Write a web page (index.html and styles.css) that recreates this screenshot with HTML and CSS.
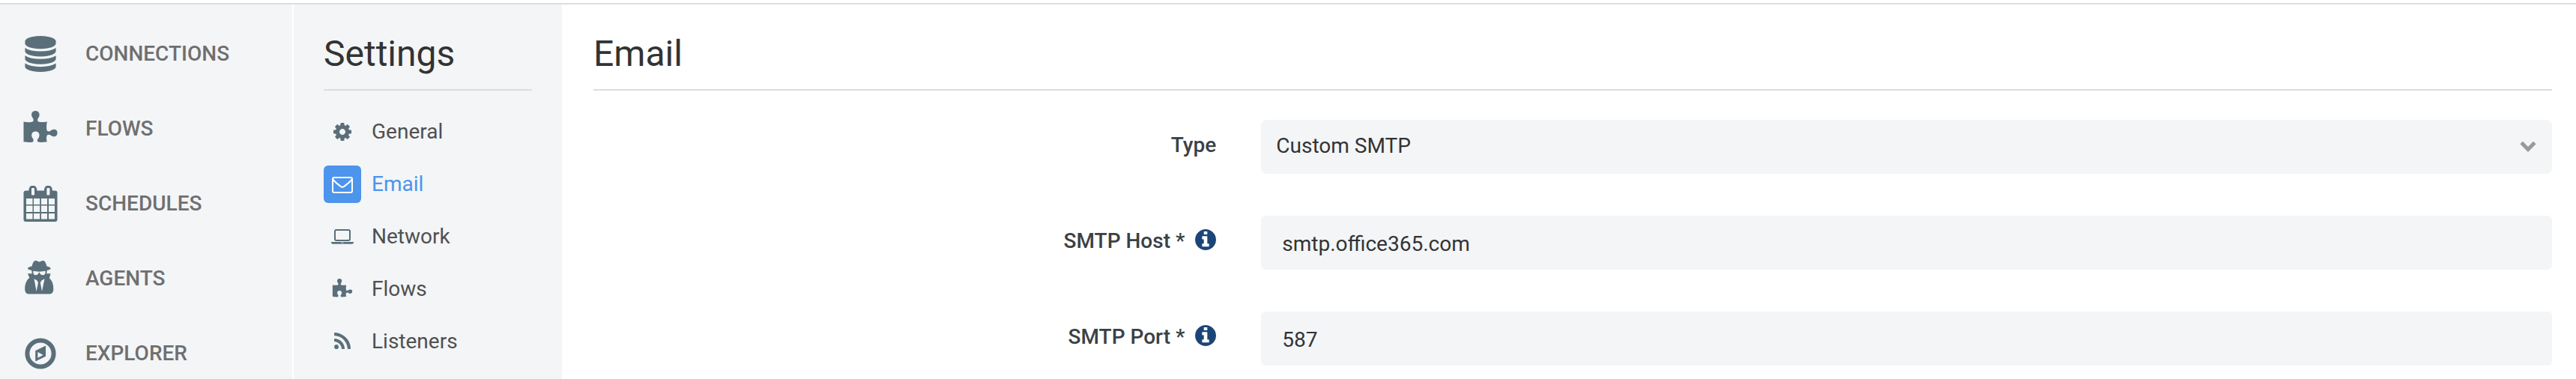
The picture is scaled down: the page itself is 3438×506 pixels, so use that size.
FILE: index.html
```html
<!DOCTYPE html>
<html lang="en">
<head>
  <meta charset="UTF-8" />
  <meta name="viewport" content="width=device-width, initial-scale=1.0"/>
  <title>Settings</title>
  <link rel="stylesheet" href="styles.css">
</head>
<body>
  <!-- Shared icons -->
  <svg class="icon-defs" aria-hidden="true">
    <symbol id="icon-puzzle" viewBox="0 0 48 48">
      <path d="M1.5 14.5C6 15.3 11 15.6 13.6 14.4C15.6 13.2 14.6 10.8 13.2 8.8C11.2 6 11.6 0 17.3 0C23 0 23.6 6 21.6 8.8C20 11 19.4 13.4 21.4 14.4C24 15.6 29 15 32.8 14.4C32.2 18 31.6 23 32.6 26C33.6 28.2 36 27.6 38 26.2C41 23.8 46.6 24 46.6 29.2C46.6 34.6 41.4 35.4 38.2 33C36.2 31.4 33.6 31 32.6 33C31.6 35.4 32 38.6 32.8 41.2C28.6 41.6 24.6 42.4 21.2 41.6C18.8 40.8 19.8 38.4 21.2 36.6C24 32.6 22.4 27.4 17.4 27.4C12.4 27.4 10.8 32.6 13.6 36.6C14.8 38.4 15.6 40.8 13.2 41.8C9.6 42.6 5.4 41.6 1.5 41.2Z"/>
    </symbol>
    <symbol id="icon-info" viewBox="128 128 1536 1536">
      <path d="M1152 1376v-160q0-14-9-23t-23-9h-96v-512q0-14-9-23t-23-9h-320q-14 0-23 9t-9 23v160q0 14 9 23t23 9h96v320h-96q-14 0-23 9t-9 23v160q0 14 9 23t23 9h448q14 0 23-9t9-23zm-128-896v-160q0-14-9-23t-23-9h-192q-14 0-23 9t-9 23v160q0 14 9 23t23 9h192q14 0 23-9t9-23zm640 416q0 209-103 385.5t-279.5 279.5-385.5 103-385.5-103-279.5-279.5-103-385.5 103-385.5 279.5-279.5 385.5-103 385.5 103 279.5 279.5 103 385.5z"/>
    </symbol>
  </svg>

  <div class="container">
    <!-- Main navigation -->
    <nav class="sidebar">
      <a href="#">
        <svg class="nav-icon" viewBox="0 0 1792 1792" aria-hidden="true">
          <path d="M896 768q237 0 443-43t325-127v170q0 69-103 128t-280 93.5-385 34.5-385-34.5-280-93.5-103-128v-170q119 84 325 127t443 43zm0 768q237 0 443-43t325-127v170q0 69-103 128t-280 93.5-385 34.5-385-34.5-280-93.5-103-128v-170q119 84 325 127t443 43zm0-384q237 0 443-43t325-127v170q0 69-103 128t-280 93.5-385 34.5-385-34.5-280-93.5-103-128v-170q119 84 325 127t443 43zm0-1152q208 0 385 34.5t280 93.5 103 128v128q0 69-103 128t-280 93.5-385 34.5-385-34.5-280-93.5-103-128v-128q0-69 103-128t280-93.5 385-34.5z"/>
        </svg>
        CONNECTIONS
      </a>
      <a href="#">
        <svg class="nav-icon" aria-hidden="true"><use href="#icon-puzzle"/></svg>
        FLOWS
      </a>
      <a href="#">
        <svg class="nav-icon" viewBox="0 0 48 48" aria-hidden="true">
          <path fill-rule="evenodd" d="M4.5 6.5H8.5V5A5.4 5.4 0 0 1 19.3 5V6.5H29V5A5.4 5.4 0 0 1 39.8 5V6.5H43.5A3 3 0 0 1 46.5 9.5V45A3 3 0 0 1 43.5 48H4.5A3 3 0 0 1 1.5 45V9.5A3 3 0 0 1 4.5 6.5ZM13 3Q12 3 12 4V11.5Q12 12.5 13 12.5H15Q16 12.5 16 11.5V4Q16 3 15 3ZM33.4 3Q32.4 3 32.4 4V11.5Q32.4 12.5 33.4 12.5H35.4Q36.4 12.5 36.4 11.5V4Q36.4 3 35.4 3ZM5 17V25H13.5V17ZM15 17V25H23.2V17ZM25 17V25H33V17ZM35 17V25H43V17ZM5 26.5V35H13.5V26.5ZM15 26.5V35H23.2V26.5ZM25 26.5V35H33V26.5ZM35 26.5V35H43V26.5ZM5 37V44.6H13.5V37ZM15 37V44.6H23.2V37ZM25 37V44.6H33V37ZM35 37V44.6H43V37Z"/>
        </svg>
        SCHEDULES
      </a>
      <a href="#">
        <svg class="nav-icon" viewBox="0 0 48 48" aria-hidden="true">
          <path fill-rule="evenodd" d="M17 0C19.5-.2 20.5 1.6 22.5 1.6S25.5-.2 28 0C30.4.6 31.6 4.5 32.4 7.4C35.5 8.2 37.6 9 37.6 10.2C37.6 11.6 35.4 12.4 32.6 13.1C32.8 14.8 32.6 16 32.1 17.3H37.6L35.8 23.4C39.4 26 41.3 31 41.3 37.4C41.3 42.2 39.4 44.6 35 44.6H9.6C5.2 44.6 3.2 42.2 3.2 37.4C3.2 31 5.6 25.4 9.4 23L7 17.3H12.9C12.4 16 12.2 14.8 12.4 13.1C9.4 12.4 7 11.6 7 10.2C7 9 9.3 8.2 12.6 7.4C13.4 4.5 14.6.6 17 0ZM14.4 13.8C14.2 18 15.2 19.2 18 19.2C20.8 19.2 21.3 17.2 21.8 15.8H22.8C23.3 17.2 24 19.2 26.8 19.2C29.6 19.2 30.8 18 30.6 13.8C26 14.9 19 14.9 14.4 13.8ZM15.5 24.2L18.6 41L21 29.5L19.5 26.4ZM29.5 24.2L25.4 26.4L23.8 29.5L26 41Z"/>
        </svg>
        AGENTS
      </a>
      <a href="#">
        <svg class="nav-icon" viewBox="0 0 48 48" aria-hidden="true">
          <circle cx="24" cy="24" r="17.6" fill="none" stroke="currentColor" stroke-width="6"/>
          <path fill-rule="evenodd" d="M31 13.4V27.8L17.2 34.6V20.2ZM20.4 22V29.8L27.6 26Z"/>
        </svg>
        EXPLORER
      </a>
    </nav>

    <!-- Settings menu -->
    <nav class="submenu">
      <h2>Settings</h2>
      <a href="#">
        <span class="menu-icon">
          <svg viewBox="0 0 1792 1792" aria-hidden="true">
            <path d="M1152 896q0-106-75-181t-181-75-181 75-75 181 75 181 181 75 181-75 75-181zm512-109v222q0 12-8 23t-20 13l-185 28q-19 54-39 91 35 50 107 138 10 12 10 25t-9 23q-27 37-99 108t-94 71q-12 0-26-9l-138-108q-44 23-91 38-16 136-29 186-7 28-36 28h-222q-14 0-24.5-8.5t-11.5-21.5l-28-184q-49-16-90-37l-141 107q-10 9-25 9-14 0-25-11-126-114-165-168-7-10-7-23 0-12 8-23 15-21 51-66.5t54-70.5q-27-50-41-99l-183-27q-13-2-21-12.5t-8-23.5v-222q0-12 8-23t19-13l186-28q14-46 39-92-40-57-107-138-10-12-10-24 0-10 9-23 26-36 98.5-107.5t94.5-71.5q13 0 26 10l138 107q44-23 91-38 16-136 29-186 7-28 36-28h222q14 0 24.5 8.5t11.5 21.5l28 184q49 16 90 37l142-107q9-9 24-9 13 0 25 10 129 119 165 170 7 8 7 22 0 12-8 23-15 21-51 66.5t-54 70.5q26 50 41 98l183 28q13 2 21 12.5t8 23.5z"/>
          </svg>
        </span>
        General
      </a>
      <a href="#" class="active">
        <span class="menu-icon">
          <svg viewBox="0 0 28 28" aria-hidden="true">
            <rect x="1" y="5" width="26" height="20" rx="2" fill="none" stroke="currentColor" stroke-width="2"/>
            <path d="M1.5 7.5C3 10.5 9 14.5 11.5 16.8Q14 18.8 16.5 16.8C19 14.5 25 10.5 26.5 7.5" fill="none" stroke="currentColor" stroke-width="2"/>
          </svg>
        </span>
        Email
      </a>
      <a href="#">
        <span class="menu-icon">
          <svg class="laptop" viewBox="0 0 30 28" aria-hidden="true">
            <rect x="5" y="5" width="20" height="14" rx="2" fill="none" stroke="currentColor" stroke-width="2"/>
            <path fill-rule="evenodd" d="M0 21H30V22C30 23.2 28.4 23.8 27 23.8H3C1.6 23.8 0 23.2 0 22ZM13.5 21.8V22.4H16.5V21.8Z"/>
          </svg>
        </span>
        Network
      </a>
      <a href="#">
        <span class="menu-icon">
          <svg aria-hidden="true"><use href="#icon-puzzle"/></svg>
        </span>
        Flows
      </a>
      <a href="#">
        <span class="menu-icon">
          <svg viewBox="0 0 1792 1792" aria-hidden="true">
            <path d="M576 1344q0 80-56 136t-136 56-136-56-56-136 56-136 136-56 136 56 56 136zm512 123q2 28-17 48-18 21-47 21h-135q-25 0-43-16.5t-20-41.5q-22-229-184.5-391.5t-391.5-184.5q-25-2-41.5-20t-16.5-43v-135q0-29 21-47 17-17 43-17h5q160 13 306 80.5t259 181.5q114 113 181.5 259t80.5 306zm512 2q2 27-18 47-18 20-46 20h-143q-26 0-44.5-17.5t-19.5-42.5q-12-215-101-408.5t-231.5-336-336-231.5-408.5-102q-25-1-42.5-19.5t-17.5-43.5v-143q0-28 20-46 18-18 44-18h3q262 13 501.5 120t425.5 294q187 186 294 425.5t120 501.5z"/>
          </svg>
        </span>
        Listeners
      </a>
    </nav>

    <!-- Email settings form -->
    <main class="main">
      <h1>Email</h1>
      <form class="settings-form">
        <div class="form-row">
          <label for="type">Type</label>
          <div class="field">
            <select id="type">
              <option>Custom SMTP</option>
            </select>
            <svg class="chevron" viewBox="0 0 22 16" aria-hidden="true">
              <path d="M2.2 2.6L11 11.4L19.8 2.6" fill="none" stroke="currentColor" stroke-width="5"/>
            </svg>
          </div>
        </div>

        <div class="form-row">
          <label for="smtpHost">SMTP Host * <svg class="info" aria-hidden="true"><use href="#icon-info"/></svg></label>
          <div class="field">
            <input type="text" id="smtpHost" value="smtp.office365.com" required>
          </div>
        </div>

        <div class="form-row">
          <label for="smtpPort">SMTP Port * <svg class="info" aria-hidden="true"><use href="#icon-info"/></svg></label>
          <div class="field">
            <input type="text" id="smtpPort" value="587" required>
          </div>
        </div>
      </form>
    </main>
  </div>
</body>
</html>
```

FILE: styles.css
```css
* {
  box-sizing: border-box;
}

body {
  margin: 0;
  padding-top: 4px;
  font-family: Roboto, sans-serif;
  font-size: 28px;
  line-height: 32px;
  background-color: #fff;
  color: #333;
  display: flex;
  flex-direction: column;
  min-height: 100vh;
}

a {
  text-decoration: none;
}

svg {
  fill: currentColor;
  flex-shrink: 0;
}

.icon-defs {
  position: absolute;
  width: 0;
  height: 0;
}

.container {
  display: flex;
  flex: 1;
  border-top: 2px solid #ddd;
}

/* Main navigation */
.sidebar {
  width: 392px;
  padding: 16px 30px 0;
  background-color: #f3f5f7;
  border-right: 2px solid #fff;
}

.sidebar a {
  display: flex;
  align-items: center;
  gap: 36px;
  height: 100px;
  color: #6f6f6f;
  font-weight: 500;
}

.nav-icon {
  width: 48px;
  height: 48px;
  color: #5a6f7a;
}

/* Settings menu */
.submenu {
  width: 358px;
  padding: 0 40px;
  background-color: #f3f5f7;
}

h1,
h2 {
  margin: 0;
  padding: 38px 0 19px;
  border-bottom: 2px solid #ddd;
  font-size: 48px;
  line-height: 56px;
  font-weight: 400;
}

.submenu h2 {
  margin-bottom: 20px;
}

.submenu a {
  display: flex;
  align-items: center;
  gap: 14px;
  height: 70px;
  color: #505050;
}

.menu-icon {
  display: flex;
  align-items: center;
  justify-content: center;
  width: 50px;
  height: 50px;
  border-radius: 6px;
  color: #5a6f7a;
}

.menu-icon svg {
  width: 28px;
  height: 28px;
}

.menu-icon .laptop {
  width: 30px;
}

.submenu a.active {
  color: #4c94ec;
}

.active .menu-icon {
  background-color: #4c94ec;
  color: #fff;
}

/* Form */
.main {
  flex: 1;
  padding: 0 32px 0 42px;
}

.settings-form {
  display: flex;
  flex-direction: column;
  gap: 56px;
  padding-top: 39px;
}

.form-row {
  display: grid;
  grid-template-columns: 1fr 2fr;
}

label {
  display: flex;
  justify-content: flex-end;
  gap: 14px;
  padding: 18px 40px 0 0;
  color: #3b4145;
  font-weight: 500;
}

.info {
  width: 28px;
  height: 28px;
  color: #1c4577;
}

.field {
  position: relative;
  padding-left: 20px;
}

input,
select {
  display: block;
  width: 100%;
  height: 72px;
  border: none;
  border-radius: 6px;
  background-color: #f3f5f7;
  color: #333;
  font: inherit;
}

input {
  padding: 2px 28px 0;
}

select {
  appearance: none;
  padding: 0 60px 2px 20px;
  border-radius: 8px;
}

.chevron {
  position: absolute;
  top: 28px;
  right: 21px;
  width: 22px;
  height: 16px;
  color: #999;
  pointer-events: none;
}
```
